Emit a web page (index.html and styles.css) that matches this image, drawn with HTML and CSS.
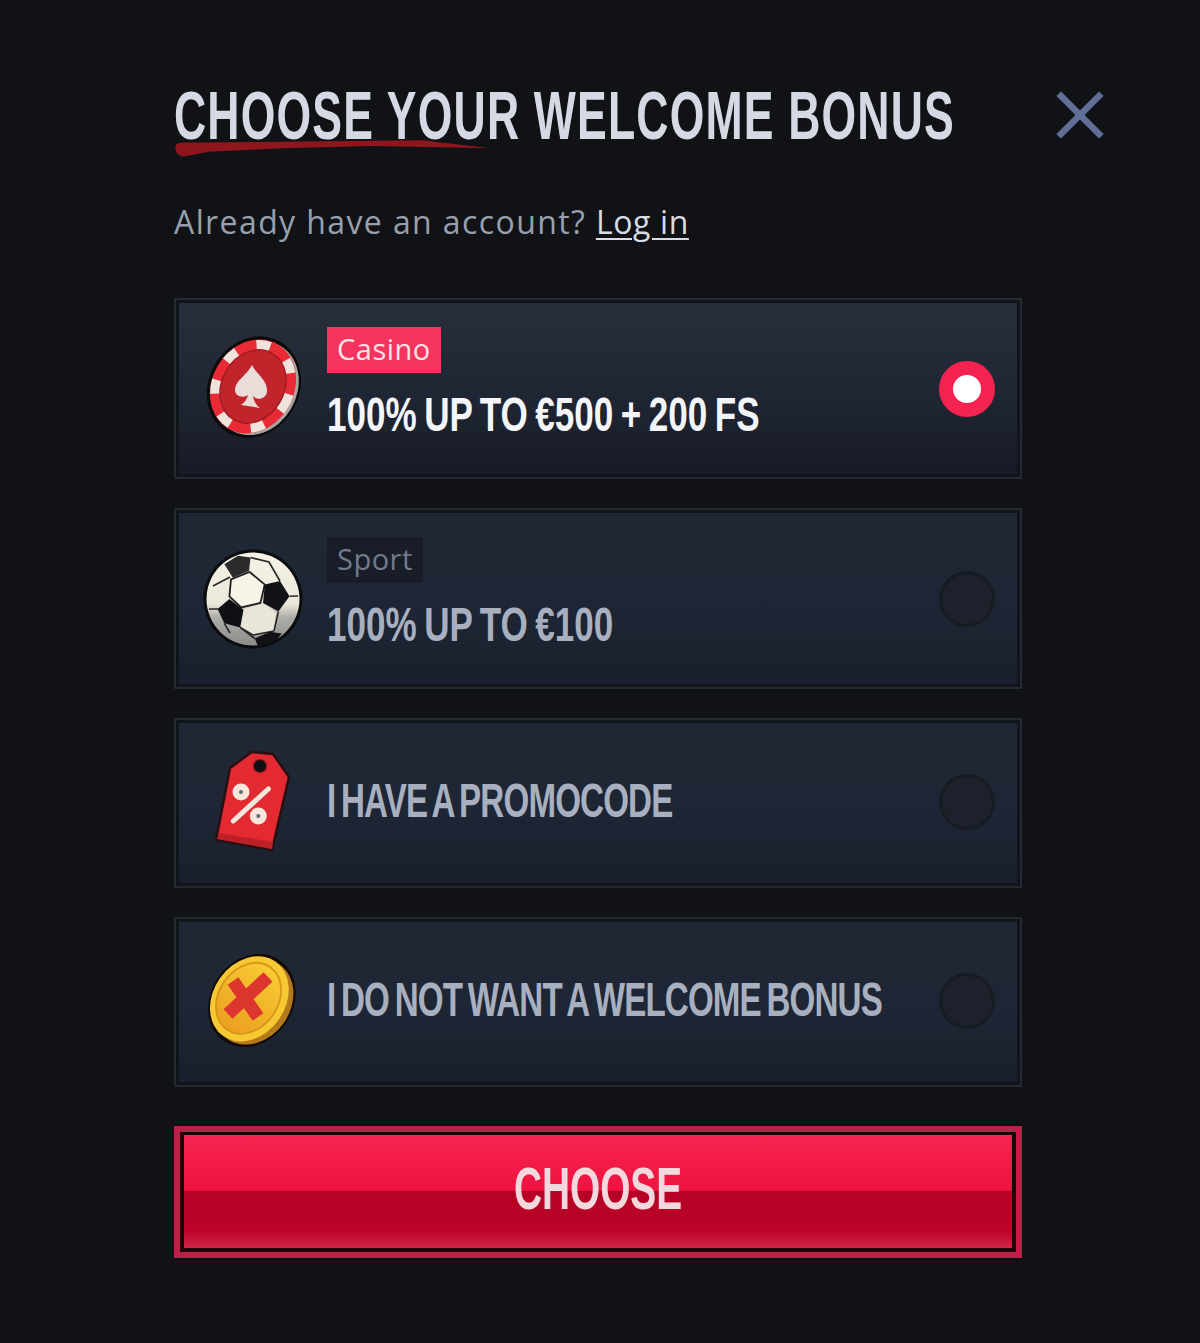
FILE: index.html
```html
<!DOCTYPE html>
<html lang="en">
<head>
<meta charset="utf-8">
<title>Choose your welcome bonus</title>
<link rel="stylesheet" href="styles.css">
</head>
<body>
<main class="modal">
  <header class="head">
    <div class="title-wrap">
      <svg class="stroke" viewBox="0 0 320 20" preserveAspectRatio="none" aria-hidden="true"><path d="M2 6 C5 3 12 4 30 4 L130 3 L250 2 L318 9 L200 7 L110 9 L35 12 L10 16 C3 16 0 10 2 6Z" fill="#8e161c"/></svg>
      <h1 class="title">CHOOSE YOUR WELCOME BONUS</h1>
    </div>
    <button class="close" aria-label="Close">
      <svg viewBox="0 0 48 48" width="48" height="48"><path d="M5 5 L43 43 M43 5 L5 43" stroke="#5f6f96" stroke-width="6.500" stroke-linecap="square" fill="none"/></svg>
    </button>
  </header>
  <p class="sub">Already have an account? <a class="login" href="#">Log in</a></p>

  <div class="options">
    <div class="card tall">
      <div class="fill active">
        <svg class="icon" viewBox="0 0 100 100" aria-hidden="true">
          <g transform="translate(50 47.500) scale(1.05) rotate(30) translate(-50 -50)">
            <ellipse cx="51" cy="50" rx="43" ry="50" fill="#0c0b0c"/>
            <ellipse cx="53" cy="50" rx="39" ry="46.500" fill="#a8a4a2"/>
            <ellipse cx="50" cy="50" rx="39" ry="46.500" fill="#ea2b36"/>
            <ellipse cx="50" cy="50" rx="34" ry="41" fill="none" stroke="#efe3dc" stroke-width="10" stroke-dasharray="13 20" stroke-dashoffset="6"/>
            <ellipse cx="50" cy="50" rx="29.500" ry="36.500" fill="#c2242c" stroke="#a31c24" stroke-width="1.500"/>
          </g>
          <path d="M49 26 C53 35 65 41 64 53 C63 60 54 62 50 57 C51 62 53 66 57 69 L38 66 C42 63 44 60 45 56 C40 60 31 57 32 50 C33 41 44 36 49 26Z" fill="#eadcd8"/>
        </svg>
        <div class="copy">
          <span class="badge on">Casino</span>
          <span class="offer bright">100% UP TO €500 + 200 FS</span>
        </div>
        <span class="radio checked"></span>
      </div>
    </div>

    <div class="card tall">
      <div class="fill">
        <svg class="icon" viewBox="0 0 100 100" aria-hidden="true">
          <defs>
            <linearGradient id="ballShade" x1="0" y1="0" x2="0" y2="1">
              <stop offset="0" stop-color="#f6f3e6"/>
              <stop offset="0.55" stop-color="#ece8da"/>
              <stop offset="0.7" stop-color="#aeaca6"/>
              <stop offset="1" stop-color="#8d8c8a"/>
            </linearGradient>
          </defs>
          <circle cx="50" cy="50" r="49.500" fill="#0a0c0f"/>
          <circle cx="50" cy="50" r="46.500" fill="url(#ballShade)"/>
          <path d="M40.500 60.800 L60 54 L73 64 L71 82 L50 86 L37.200 78.400Z" fill="#e9e5d8"/>
          <path d="M37.200 78.400 L50 86 L71 82" stroke="#24262a" stroke-width="1.500" fill="none"/>
          <path d="M46.600 23 L61.800 35.500 L57.400 54 L38.200 58.400 L26.400 47.300 L28 30.400Z" fill="#f7f4e7" stroke="#1d1f23" stroke-width="1.800"/>
          <path d="M21.300 15.200 L34.800 6.800 L47.600 8.500 L46 22 L29.900 28.800Z" fill="#2b2b2e"/>
          <path d="M61.800 35.500 L77 32 L86.500 47.300 L75.400 62.500 L60 54Z" fill="#111216"/>
          <path d="M26.400 50 L40.500 60.800 L37.200 78.400 L21.300 74.300 L14.600 60.100Z" fill="#0e0f13"/>
          <path d="M51.700 89.500 L66.900 82.800 L78.700 84.500 L72 93 L55 97Z" fill="#111216"/>
          <path d="M47.600 8.500 L66 13 L77 32 M27 28 L10 37 M15 60 L6 60 M75.400 62.500 L71 82 M86.500 47.300 L95 47 M37.200 78.400 L51.700 89.500 M21.300 74.300 L27 84" stroke="#24262a" stroke-width="1.600" fill="none"/>
        </svg>
        <div class="copy">
          <span class="badge off">Sport</span>
          <span class="offer">100% UP TO €100</span>
        </div>
        <span class="radio"></span>
      </div>
    </div>

    <div class="card">
      <div class="fill single">
        <svg class="icon" viewBox="0 0 100 100" aria-hidden="true">
          <path d="M27 17 L48.700 1 L70 3 L86 26 L69 99 L13 89Z" fill="#e32a31" stroke="#2a0f12" stroke-width="2.500" stroke-linejoin="round"/>
          <path d="M16 82 L70 91 L69 98 L14 88Z" fill="#bd2027"/>
          <circle cx="57" cy="15" r="6.500" fill="#0f1013" stroke="#8a1218" stroke-width="1.200"/>
          <path d="M65.300 38 L30.300 70" stroke="#f6e6dc" stroke-width="5" stroke-linecap="round"/>
          <circle cx="38" cy="41" r="8.500" fill="#f6e6dc"/>
          <circle cx="38" cy="41" r="2" fill="#6a6470"/>
          <circle cx="55.300" cy="65" r="8.500" fill="#f6e6dc"/>
          <circle cx="55.300" cy="65" r="2" fill="#6a6470"/>
        </svg>
        <span class="offer tight">I HAVE A PROMOCODE</span>
        <span class="radio"></span>
      </div>
    </div>

    <div class="card">
      <div class="fill single">
        <svg class="icon" viewBox="0 0 100 100" aria-hidden="true">
          <defs>
            <linearGradient id="coinFace" x1="0" y1="0" x2="0" y2="1">
              <stop offset="0" stop-color="#f8cb34"/>
              <stop offset="1" stop-color="#eb9f20"/>
            </linearGradient>
          </defs>
          <g transform="translate(-2 0) rotate(35 50 50)">
            <ellipse cx="51" cy="50" rx="41" ry="49" fill="#120b06"/>
            <ellipse cx="53" cy="50" rx="37" ry="45.500" fill="#b37a1c"/>
            <ellipse cx="48" cy="50" rx="36" ry="45.500" fill="#f6c832"/>
            <ellipse cx="47" cy="50" rx="29.500" ry="38" fill="url(#coinFace)" stroke="#d8951c" stroke-width="1.800"/>
          </g>
          <path d="M25 64 L65 27 M30 31 L55 67" stroke="#dc362e" stroke-width="13" fill="none"/>
        </svg>
        <span class="offer tight">I DO NOT WANT A WELCOME BONUS</span>
        <span class="radio"></span>
      </div>
    </div>
  </div>

  <button class="cta"><span class="cta-fill"><span class="cta-label">CHOOSE</span></span></button>
</main>
</body>
</html>
```
FILE: styles.css
```css
* { box-sizing: border-box; }
html, body { margin: 0; height: 100%; }
body {
  background: #101216;
  color: #d8dde8;
  font-family: "Open Sans", "Liberation Sans", sans-serif;
}
.modal {
  width: 1200px;
  height: 1343px;
  padding: 82px 0 0 174px;
  overflow: hidden;
}
.head {
  display: flex;
  justify-content: space-between;
  align-items: center;
  width: 930px;
  height: 66px;
}
.title-wrap { position: relative; width: 780px; }
.title {
  position: relative;
  margin: 0;
  width: max-content;
  font-family: "Liberation Sans", sans-serif;
  font-weight: 700;
  font-size: 68px;
  line-height: 66px;
  letter-spacing: 1.800px;
  color: #d4d9e4;
  white-space: nowrap;
  transform: scaleX(0.655);
  transform-origin: left center;
}
.stroke {
  position: absolute;
  left: 0;
  top: 56px;
  width: 318px;
  height: 23px;
}
.close {
  padding: 0;
  border: 0;
  background: none;
  display: flex;
}
.sub {
  margin: 52px 0 0;
  height: 44px;
  font-size: 32px;
  line-height: 44px;
  letter-spacing: 1.400px;
  color: #98a0ae;
  white-space: nowrap;
}
.login {
  letter-spacing: 0.600px;
  color: #d8dce4;
  text-decoration: underline;
  text-underline-offset: 4px;
  text-decoration-thickness: 2px;
}
.options {
  display: flex;
  flex-direction: column;
  gap: 29px;
  width: 848px;
  margin-top: 54px;
}
.card {
  height: 170px;
  padding: 3px;
  border: 2px solid #242932;
  background: #10141b;
}
.tall { height: 181px; }
.fill {
  display: flex;
  align-items: center;
  gap: 24px;
  height: 100%;
  padding: 0 22px 0 24px;
  background: linear-gradient(180deg, #202734 0%, #1e2635 55%, #191f2c 100%);
}
.single { padding-bottom: 4px; }
.single .radio { margin-top: 2px; }
.active { background: linear-gradient(180deg, #282e3b 0%, #1f2633 55%, #171b25 100%); }
.icon { flex: none; width: 100px; height: 100px; overflow: visible; }
.copy {
  flex: 1;
  min-width: 0;
  display: flex;
  flex-direction: column;
  align-items: flex-start;
  gap: 16px;
  padding-bottom: 9px;
}
.badge {
  height: 46px;
  padding: 0 10px;
  font-size: 29px;
  line-height: 44px;
  letter-spacing: 0.500px;
}
.on { background: #f4345f; color: #fbe2e6; }
.off { background: #181d28; color: #717a8c; }
.offer {
  display: block;
  width: max-content;
  font-family: "Liberation Sans", sans-serif;
  font-weight: 700;
  font-size: 48px;
  line-height: 52px;
  word-spacing: -3px;
  color: #a8b0c0;
  white-space: nowrap;
  transform: scaleX(0.73);
  transform-origin: left center;
}
.tight {
  flex: 1;
  min-width: 0;
  letter-spacing: -1.200px;
  word-spacing: -4px;
  transform: scaleX(0.69);
}
.bright { color: #f4f5f8; }
.radio {
  flex: none;
  width: 56px;
  height: 56px;
  margin-left: auto;
  border: 3px solid #171b23;
  border-radius: 50%;
  background: #1c212b;
}
.checked {
  border: 14px solid #f5234f;
  background: #fff;
}
.cta {
  display: block;
  width: 848px;
  height: 132px;
  margin-top: 39px;
  padding: 3px 4px 4px;
  border: 6px solid #bb2048;
  background: #1f0206;
}
.cta-fill {
  display: block;
  height: 100%;
  font-family: "Liberation Sans", sans-serif;
  font-weight: 700;
  font-size: 60px;
  line-height: 108px;
  color: #f3d9dd;
  background: linear-gradient(180deg, #f72350 0%, #ee1340 49%, #b60125 50%, #bc0329 85%, #d0274a 100%);
}
.cta-label {
  display: inline-block;
  transform: scaleX(0.647);
}
```
